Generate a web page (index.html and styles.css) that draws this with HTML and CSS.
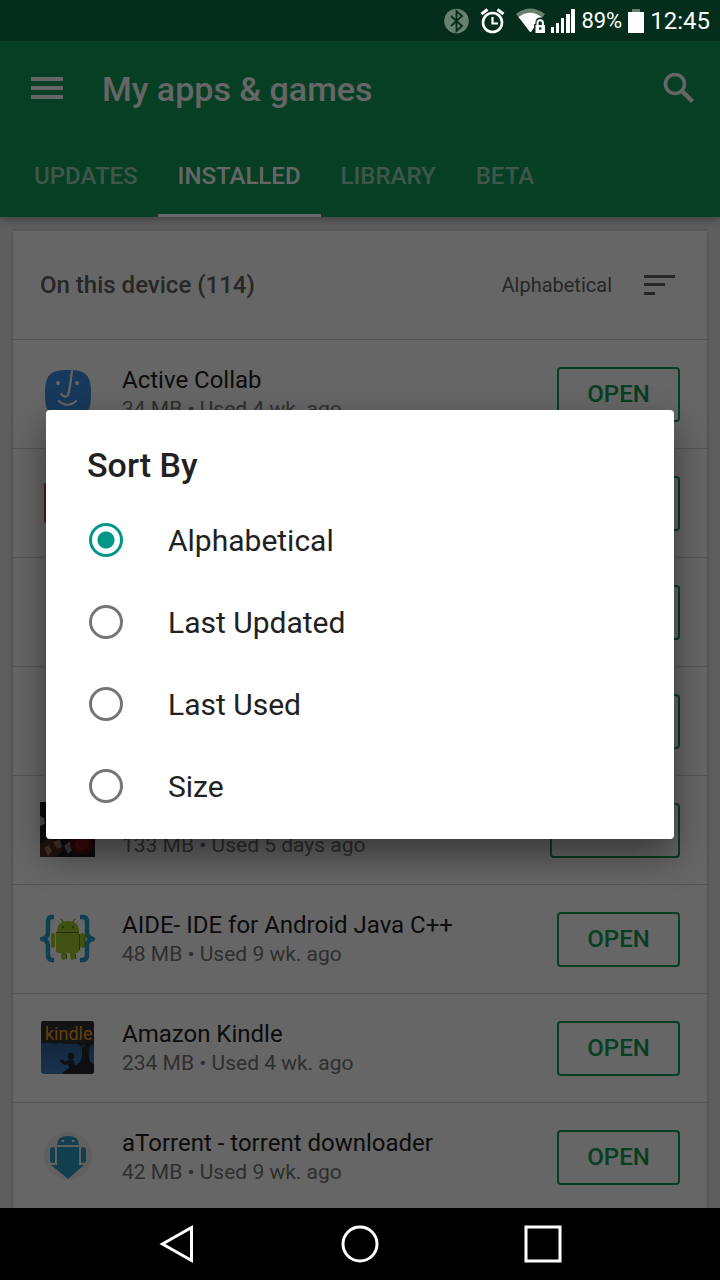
FILE: index.html
```html
<!DOCTYPE html>
<html lang="en">

<head>
    <meta charset="UTF-8">
    <meta name="viewport" content="width=device-width, initial-scale=1">
    <title>My apps &amp; games</title>
    <link rel="stylesheet" href="styles.css">
</head>

<body>

    <!-- status bar -->
    <div class="status">
        <svg class="spaced" width="25" height="26" viewBox="0 0 25 26">
            <circle cx="12.5" cy="13" r="12.3" fill="#68816f" />
            <path d="M7 8l11 10-5.500 5V3l5.500 5L7 18" fill="none" stroke="#042d1b" stroke-width="1.800" />
        </svg>
        <svg class="spaced" width="25" height="26" viewBox="0 0 25 26" fill="none" stroke="#fff">
            <circle cx="12.500" cy="14.500" r="9.500" stroke-width="2.600" />
            <path d="M12.500 9v6.500H18" stroke-width="2.200" />
            <path d="M1.500 6l6-4.500M23.500 6l-6-4.500" stroke-width="3" />
        </svg>
        <svg width="29" height="26" viewBox="0 0 29 26">
            <path d="M0 6Q14-5 29 6l-4 5Q14 2 4 11z" fill="#68816f" />
            <path d="M2.500 9Q14 .5 25.500 9L15 24h-1z" fill="#fff" />
            <path d="M18 26v-9.500l1.500-1V14a4.500 4.500 0 0 1 9 0v2z" fill="#042d1b" />
            <path d="M19.500 17H29v8h-9.500z" fill="#fff" />
            <path d="M21.500 18v-3a2.700 2.700 0 0 1 5.400 0v3" fill="none" stroke="#fff" stroke-width="2" />
            <circle cx="24.200" cy="20.500" r="1.300" fill="#042d1b" />
        </svg>
        <svg width="24" height="26" viewBox="0 0 24 26" fill="#fff">
            <path d="M0 19h3v6H0zM5 15h3v10H5zM10 10h3v15h-3zM15 6h4v19h-4zM20 1h4v24h-4z" />
        </svg>
        <span class="percent">89%</span>
        <svg width="16" height="26" viewBox="0 0 16 26">
            <path d="M4 1h8v3H4z" fill="#68816f" />
            <path d="M0 4h16v21H0z" fill="#fff" />
        </svg>
        <span class="clock">12:45</span>
    </div>

    <div class="screen">
        <header class="header">
            <div class="toolbar">
                <button class="icon-btn" aria-label="Menu">
                    <svg width="32" height="32" viewBox="0 0 32 32" fill="#fff">
                        <path d="M0 4h32v4H0zM0 13h32v4H0zM0 22h32v4H0z" />
                    </svg>
                </button>
                <h1>My apps &amp; games</h1>
                <button class="icon-btn" aria-label="Search">
                    <svg width="32" height="32" viewBox="0 0 32 32" fill="none" stroke="#fff">
                        <circle cx="12" cy="11" r="9.500" stroke-width="3.600" />
                        <path d="M19 18l10.500 10.500" stroke-width="4.500" />
                    </svg>
                </button>
            </div>
            <nav class="tabs">
                <a href="#updates">UPDATES</a>
                <a href="#installed" class="active">INSTALLED</a>
                <a href="#library">LIBRARY</a>
                <a href="#beta">BETA</a>
            </nav>
        </header>

        <main class="card">
            <div class="card-head">
                <h2>On this device (114)</h2>
                <button class="sort">
                    Alphabetical
                    <svg width="31" height="22" viewBox="0 0 31 22" fill="#616161">
                        <path d="M0 1h31v3H0zM0 9h21v3H0zM0 18h11v3H0z" />
                    </svg>
                </button>
            </div>

            <div class="row">
                <svg class="app-icon" viewBox="0 0 56 56">
                    <path d="M28 4C46 4 51 9 51 28S46 52 28 52 5 47 5 28 10 4 28 4z" fill="#3d8ee5" />
                    <g fill="none" stroke="#fff" stroke-width="2.200" stroke-linecap="round">
                        <path d="M32 5c-1 7-2 19-4 24-2 3-5 1-7-1" />
                        <path d="M19 35c5 5 12 5 17 0" />
                    </g>
                    <circle cx="18" cy="17" r="2" fill="#fff" />
                    <circle cx="37" cy="17" r="2" fill="#fff" />
                </svg>
                <div class="info">
                    <h3>Active Collab</h3>
                    <p>34 MB • Used 4 wk. ago</p>
                </div>
                <button class="open">OPEN</button>
            </div>
            <div class="row">
                <svg class="app-icon" viewBox="0 0 56 56">
                    <rect x="4" y="8" width="48" height="40" rx="2" fill="#c9484c" />
                </svg>
                <div class="info"></div>
                <button class="open">OPEN</button>
            </div>
            <div class="row">
                <div class="info"></div>
                <button class="open">OPEN</button>
            </div>
            <div class="row">
                <div class="info"></div>
                <button class="open">OPEN</button>
            </div>
            <div class="row">
                <svg class="app-icon" viewBox="0 0 56 56">
                    <path d="M0 0h55v55H0z" fill="#1d1a22" />
                    <path d="M0 14l4 2 1 6-5 2z" fill="#b4b4ae" />
                    <path d="M0 42l8-6 10 4 6 8-8 7H0z" fill="#54301f" />
                    <path d="M4 46l5-3 3 6-4 5zM13 40l7-3 2 8-5 2z" fill="#a77b5e" />
                    <path d="M24 44l6-5 3 8-5 5z" fill="#94949c" />
                    <ellipse cx="42" cy="43" rx="12" ry="9" fill="#64131b" />
                    <ellipse cx="42" cy="42" rx="7" ry="6" fill="#a51b27" />
                </svg>
                <div class="info">
                    <h3>&nbsp;</h3>
                    <p>133 MB • Used 5 days ago</p>
                </div>
                <button class="open wide">UPDATE</button>
            </div>
            <div class="row">
                <svg class="app-icon" viewBox="0 0 56 56">
                    <g fill="none" stroke="#2a9fc9" stroke-width="4.500" stroke-linejoin="round">
                        <path d="M14 6h-2q-4 0-4 5v10q0 6-6 7 6 1 6 7v9q0 5 4 5h2" />
                        <path d="M40 6h3q4 0 4 5v10q0 6 6 7-6 1-6 7v9q0 5-4 5h-3" />
                    </g>
                    <g fill="#a2cb2f">
                        <path d="M17 21Q17 10 28 10t11 11z" />
                        <path d="M16 22h23v17q0 3-3 3H19q-3 0-3-3z" />
                        <rect x="11" y="22" width="4" height="15" rx="2" />
                        <rect x="40" y="22" width="5" height="15" rx="2.500" />
                        <path d="M21 42h5v5q-2.500 4-5 0zM30 42h5v5q-2.500 4-5 0z" />
                    </g>
                    <path d="M16 21.500h23M39.500 23v16M26.500 43v5M35.500 43v5M45 24v12" stroke="#5c7a10" />
                    <path d="M21 8l3 4M35 8l-3 4" stroke="#a2cb2f" stroke-width="1.500" />
                    <circle cx="23" cy="16" r="1.200" fill="#5c7a10" />
                    <circle cx="33" cy="16" r="1.200" fill="#5c7a10" />
                </svg>
                <div class="info">
                    <h3>AIDE- IDE for Android Java C++</h3>
                    <p>48 MB • Used 9 wk. ago</p>
                </div>
                <button class="open">OPEN</button>
            </div>
            <div class="row">
                <svg class="app-icon" viewBox="0 0 56 56">
                    <defs>
                        <linearGradient id="sky" x2="0" y2="1">
                            <stop offset=".3" stop-color="#2c5a92" />
                            <stop offset="1" stop-color="#3f80c4" />
                        </linearGradient>
                    </defs>
                    <rect x="1" y="1" width="53" height="53" rx="3" fill="url(#sky)" />
                    <path d="M1 4q0-3 3-3h47q3 0 3 3v21l-4-1-1 3-4-2-3 1-4-2-5 0-4 0-5 0-4-1-5 1-3-1-5 0-6 0z" fill="#303036" />
                    <path d="M38 22l5 6 4-6 5 1-3 5v10q1 5 5 6v7q0 3-3 3H22l6-2 3-4 5-3q6-3 6-9v-7z" fill="#26262b" />
                    <circle cx="31" cy="36" r="3.200" fill="#26262b" />
                    <path d="M29 39l5 1 2 10-12 4-2-1 7-5-1-4-3 1-4-4 1-2 4 3zM20 40l5 3-1 2-4-4z" fill="#26262b" />
                    <text class="kindle" x="5" y="20">kindle</text>
                </svg>
                <div class="info">
                    <h3>Amazon Kindle</h3>
                    <p>234 MB • Used 4 wk. ago</p>
                </div>
                <button class="open">OPEN</button>
            </div>
            <div class="row">
                <svg class="app-icon" viewBox="0 0 56 56">
                    <circle cx="28" cy="27" r="24" fill="#f2f1ee" />
                    <g fill="#2f9dc9">
                        <path d="M17 16Q17 7 28 7t11 9z" />
                        <path d="M17 18h22v18h5L28 50 11 36h6z" />
                        <rect x="10" y="18" width="5" height="16" rx="2.500" />
                        <rect x="41" y="18" width="5" height="16" rx="2.500" />
                    </g>
                    <circle cx="23" cy="12" r="1.300" fill="#fff" />
                    <circle cx="33" cy="12" r="1.300" fill="#fff" />
                </svg>
                <div class="info">
                    <h3>aTorrent - torrent downloader</h3>
                    <p>42 MB • Used 9 wk. ago</p>
                </div>
                <button class="open">OPEN</button>
            </div>
        </main>

        <!-- sort dialog -->
        <div class="overlay">
            <form class="dialog" role="dialog" aria-labelledby="sort-title">
                <h2 id="sort-title">Sort By</h2>
                <label><input type="radio" name="sort" checked>Alphabetical</label>
                <label><input type="radio" name="sort">Last Updated</label>
                <label><input type="radio" name="sort">Last Used</label>
                <label><input type="radio" name="sort">Size</label>
            </form>
        </div>
    </div>

    <!-- navigation bar -->
    <div class="navbar">
        <button aria-label="Back">
            <svg width="40" height="40" viewBox="0 0 40 40"><path d="M34.500 3.500v33L5.500 20z" /></svg>
        </button>
        <button aria-label="Home">
            <svg width="40" height="40" viewBox="0 0 40 40"><circle cx="20" cy="20" r="17" /></svg>
        </button>
        <button aria-label="Recent apps">
            <svg width="40" height="40" viewBox="0 0 40 40"><path d="M3 3h34v34H3z" /></svg>
        </button>
    </div>

</body>

</html>
```
FILE: styles.css
```css
* {
    margin: 0;
    padding: 0;
    box-sizing: border-box;
}

body {
    display: flex;
    flex-direction: column;
    height: 100vh;
    overflow: hidden;
    font-family: Roboto, "Liberation Sans", sans-serif;
    color: #212121;
}

button {
    border: none;
    background: none;
    font-family: inherit;
}

svg {
    display: block;
    flex: none;
}

/* status bar */
.status {
    display: flex;
    align-items: center;
    justify-content: flex-end;
    gap: 6px;
    height: 41px;
    padding-right: 10px;
    background: #042d1b;
    color: #fff;
}

.spaced {
    margin-right: 5px;
}

.percent {
    font-size: 22px;
}

.clock {
    font-size: 24px;
}

.screen {
    position: relative;
    flex: 1;
    min-height: 0;
    overflow: hidden;
    background: #ebebeb;
}

/* header */
.header {
    position: relative;
    background: #0f9d58;
    color: #fff;
    box-shadow: 0 3px 8px rgba(0, 0, 0, .3);
}

.toolbar {
    display: flex;
    align-items: center;
    height: 96px;
    padding: 0 25px 0 31px;
}

.toolbar h1 {
    flex: 1;
    margin-left: 39px;
    font-size: 34px;
    font-weight: 500;
}

.tabs {
    display: flex;
    height: 80px;
    padding: 0 14px;
}

.tabs a {
    padding: 0 20px;
    border-bottom: 3px solid transparent;
    color: rgba(255, 255, 255, .6);
    font-size: 24px;
    font-weight: 500;
    line-height: 78px;
    text-decoration: none;
}

.tabs .active {
    border-color: #fff;
    color: #fff;
}

/* app list */
.card {
    margin: 14px 13px 0;
    background: #fff;
    box-shadow: 0 0 3px rgba(0, 0, 0, .3);
}

.card-head {
    display: flex;
    align-items: center;
    justify-content: space-between;
    height: 108px;
    padding: 0 32px 0 27px;
}

.card-head h2 {
    color: #616161;
    font-size: 24px;
    font-weight: 500;
}

.sort {
    display: flex;
    align-items: center;
    gap: 32px;
    color: #616161;
    font-size: 20px;
}

.row {
    display: flex;
    align-items: center;
    gap: 26px;
    height: 109px;
    padding: 0 27px;
    border-top: 1px solid #d4d4d4;
}

.app-icon {
    width: 56px;
    height: 56px;
}

.kindle {
    fill: #f5a01f;
    font-family: Roboto, sans-serif;
    font-size: 18px;
}

.info {
    flex: 1;
}

.info h3 {
    font-size: 24px;
    font-weight: 400;
    line-height: 30px;
}

.info p {
    color: #757575;
    font-size: 21px;
    line-height: 28px;
}

.open {
    width: 123px;
    height: 55px;
    border: 2px solid #0f9d58;
    border-radius: 4px;
    color: #0f9d58;
    font-size: 24px;
    font-weight: 500;
}

.wide {
    width: 130px;
}

/* sort dialog */
.overlay {
    position: absolute;
    inset: 0;
    display: flex;
    align-items: center;
    padding: 0 46px;
    background: rgba(0, 0, 0, .6);
}

.dialog {
    flex: 1;
    padding: 0 41px 12px;
    border-radius: 4px;
    background: #fff;
    box-shadow: 0 16px 36px rgba(0, 0, 0, .45);
}

.dialog h2 {
    padding: 34px 0 13px;
    font-size: 34px;
    font-weight: 500;
    line-height: 42px;
}

.dialog label {
    display: flex;
    align-items: center;
    height: 82px;
    font-size: 30px;
}

.dialog input {
    appearance: none;
    width: 34px;
    height: 34px;
    margin: 0 45px 0 2px;
    border: 3px solid #757575;
    border-radius: 50%;
}

.dialog input:checked {
    border-color: #009688;
    background: radial-gradient(circle, #009688 8px, #fff 9px);
}

/* navigation bar */
.navbar {
    display: flex;
    align-items: center;
    justify-content: space-between;
    height: 72px;
    padding: 0 157px;
    background: #000;
}

.navbar svg {
    fill: none;
    stroke: #fff;
    stroke-width: 3;
}
```
